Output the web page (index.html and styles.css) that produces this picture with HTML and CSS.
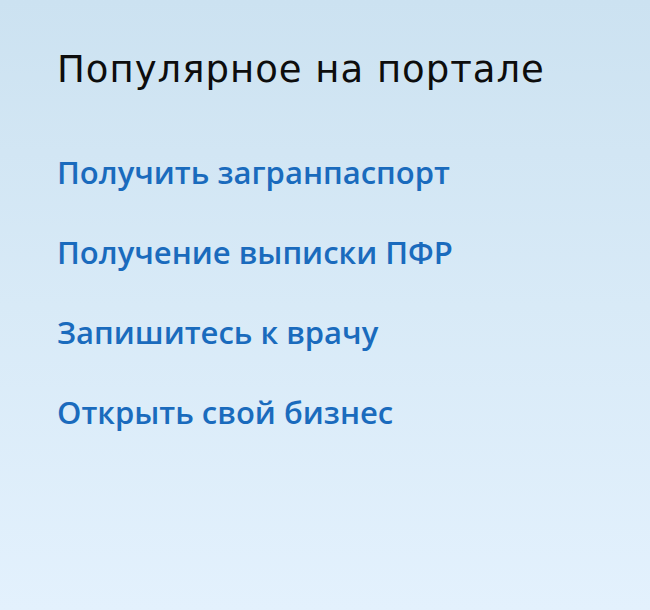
FILE: index.html
```html
<!DOCTYPE html>
<html lang="ru">
<head>
<meta charset="utf-8">
<link rel="stylesheet" href="styles.css">
</head>
<body>
<main class="popular">
  <h2 class="popular-title">Популярное на портале</h2>
  <ul class="popular-list">
    <li><a href="#">Получить загранпаспорт</a></li>
    <li><a href="#">Получение выписки ПФР</a></li>
    <li><a href="#">Запишитесь к врачу</a></li>
    <li><a href="#">Открыть свой бизнес</a></li>
  </ul>
</main>
</body>
</html>
```
FILE: styles.css
```css
html, body {
  margin: 0;
  padding: 0;
  height: 100%;
}
body {
  background: linear-gradient(to bottom, #cce2f1 0%, #d8eaf7 50%, #e3f1fd 100%);
}
.popular {
  padding: 48px 0 0 57px;
}
.popular-title {
  margin: 0;
  font-family: "DejaVu Sans", sans-serif;
  font-weight: 400;
  font-size: 37px;
  letter-spacing: 1px;
  line-height: 44px;
  color: #0d0d0d;
}
.popular-list {
  list-style: none;
  margin: 0;
  padding: 60px 0 0 0;
  display: flex;
  flex-direction: column;
  gap: 40px;
}
.popular-list a {
  display: block;
  font-family: "Open Sans", sans-serif;
  font-weight: 600;
  font-size: 31px;
  line-height: 40px;
  color: #1a6bbd;
  text-decoration: none;
}
```
